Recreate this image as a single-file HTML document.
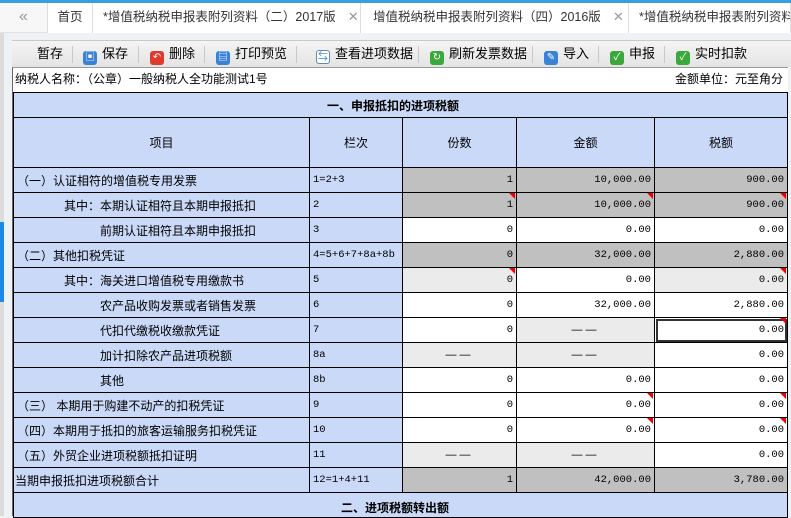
<!DOCTYPE html>
<html><head><meta charset="utf-8"><style>
*{margin:0;padding:0;box-sizing:border-box}
body{width:791px;height:516px;overflow:hidden;background:#eef2f5;font-family:"Liberation Sans","Noto Sans CJK SC",sans-serif;font-size:12px;color:#000;position:relative}
.topline{position:absolute;left:0;top:0;width:791px;height:3px;background:#3a9de0}
.tabs{position:absolute;left:0;top:3px;width:791px;height:30px;background:#f7f7f7;border-bottom:1px solid #e2e2e2}
.tab{position:absolute;top:0;height:30px;line-height:28px;font-size:12.5px;color:#333;border-right:1px solid #ddd;white-space:nowrap;overflow:hidden}
.x{color:#999;font-size:13px;margin-left:12px}
.leftbar{position:absolute;left:0;top:33px;width:4px;height:483px;background:#dcdcdc}
.bluetab{position:absolute;left:0;top:222px;width:4px;height:80px;background:#1e88e5}
.toolbar{position:absolute;left:12px;top:40px;width:779px;height:27px;background:linear-gradient(#f4f4f4,#e4e4e4);border-top:1px solid #c8c8c8}
.tb{position:absolute;top:0;height:26px;line-height:26px;font-size:13px;white-space:nowrap}
.ic{display:inline-block;width:14px;height:14px;border-radius:3px;vertical-align:-2px;margin-right:5px;color:#fff;font-size:10px;line-height:14px;text-align:center}
.sep{position:absolute;top:5px;width:1px;height:17px;background:#c8c8c8}
.panel{position:absolute;left:12px;top:67px;width:776px;height:449px;background:#fff;border-left:1px solid #666;border-top:1px solid #999}
.info{position:absolute;left:15px;top:70px;font-size:12px}
.unit{position:absolute;right:8px;top:70px;font-size:12px}
table{position:absolute;left:13px;top:92px;border-collapse:collapse;table-layout:fixed;width:774px}
td{border:1px solid #000;height:25px;background:#c9d9f7;font-size:12px;white-space:nowrap;overflow:hidden;position:relative;padding:0 3px}
.c{text-align:center}
.n{text-align:right;font-family:"Liberation Mono",monospace;font-size:10.5px}
.g{background:#c0c0c0}.w{background:#fff}.l{background:#ebebeb}
.lc{font-family:"Liberation Mono",monospace;font-size:10.5px}
.d{text-align:center;font-size:11px;letter-spacing:3px}
.r::after{content:"";position:absolute;right:1px;top:0;border-top:6px solid #e00;border-left:6px solid transparent}
.sel{outline:2px solid #333;outline-offset:-3px}
</style></head><body>
<div class="topline"></div>
<div class="tabs">
<div class="tab" style="left:0;width:48px;text-align:center;color:#999;font-size:16px">«</div>
<div class="tab" style="left:48px;width:45px;text-align:center;background:#fff">首页</div>
<div class="tab" style="left:93px;width:268px;padding-left:10px;background:#fff">*增值税纳税申报表附列资料（二）2017版<span class="x">✕</span></div>
<div class="tab" style="left:361px;width:268px;padding-left:12px;background:#fff">增值税纳税申报表附列资料（四）2016版<span class="x">✕</span></div>
<div class="tab" style="left:629px;width:162px;padding-left:10px;background:#fff">*增值税纳税申报表附列资料</div>
</div>
<div class="leftbar"></div><div class="bluetab"></div>
<div class="toolbar">
<div class="tb" style="left:25px">暂存</div><div class="sep" style="left:60px"></div>
<div class="tb" style="left:71px"><span class="ic" style="background:#3b82d6">▣</span>保存</div><div class="sep" style="left:126px"></div>
<div class="tb" style="left:138px"><span class="ic" style="background:#e03a2e">↶</span>删除</div><div class="sep" style="left:192px"></div>
<div class="tb" style="left:204px"><span class="ic" style="background:#3b82d6">▤</span>打印预览</div><div class="sep" style="left:284px"></div>
<div class="tb" style="left:304px"><span class="ic" style="background:#fff;border:1px solid #68a;color:#38c">⇆</span>查看进项数据</div><div class="sep" style="left:406px"></div>
<div class="tb" style="left:418px"><span class="ic" style="background:#3aa83a">↻</span>刷新发票数据</div><div class="sep" style="left:520px"></div>
<div class="tb" style="left:532px"><span class="ic" style="background:#3b82d6">✎</span>导入</div><div class="sep" style="left:586px"></div>
<div class="tb" style="left:598px"><span class="ic" style="background:#3aa83a">✓</span>申报</div><div class="sep" style="left:652px"></div>
<div class="tb" style="left:664px"><span class="ic" style="background:#3aa83a">✓</span>实时扣款</div>
</div>
<div class="panel"></div>
<div class="info">纳税人名称：（公章）一般纳税人全功能测试1号</div>
<div class="unit">金额单位：元至角分</div>
<table>
<colgroup><col style="width:296px"><col style="width:93px"><col style="width:114px"><col style="width:138px"><col style="width:133px"></colgroup>
<tr><td colspan="5" style="padding-left:313px;font-weight:bold">一、申报抵扣的进项税额</td></tr>
<tr><td class="c" style="height:50px">项目</td><td class="c">栏次</td><td class="c">份数</td><td class="c">金额</td><td class="c">税额</td></tr>
<tr><td>（一）认证相符的增值税专用发票</td><td class="lc">1=2+3</td><td class="n g">1</td><td class="n g">10,000.00</td><td class="n g">900.00</td></tr>
<tr><td style="padding-left:50px">其中：本期认证相符且本期申报抵扣</td><td class="lc">2</td><td class="n g r">1</td><td class="n g r">10,000.00</td><td class="n g r">900.00</td></tr>
<tr><td style="padding-left:86px">前期认证相符且本期申报抵扣</td><td class="lc">3</td><td class="n w">0</td><td class="n w">0.00</td><td class="n w">0.00</td></tr>
<tr><td>（二）其他扣税凭证</td><td class="lc">4=5+6+7+8a+8b</td><td class="n g">0</td><td class="n g">32,000.00</td><td class="n g">2,880.00</td></tr>
<tr><td style="padding-left:50px">其中：海关进口增值税专用缴款书</td><td class="lc">5</td><td class="n l r">0</td><td class="n w">0.00</td><td class="n l r">0.00</td></tr>
<tr><td style="padding-left:86px">农产品收购发票或者销售发票</td><td class="lc">6</td><td class="n w">0</td><td class="n w">32,000.00</td><td class="n w">2,880.00</td></tr>
<tr><td style="padding-left:86px">代扣代缴税收缴款凭证</td><td class="lc">7</td><td class="n w">0</td><td class="d l">——</td><td class="n w r sel">0.00</td></tr>
<tr><td style="padding-left:86px">加计扣除农产品进项税额</td><td class="lc">8a</td><td class="d l">——</td><td class="d l">——</td><td class="n w">0.00</td></tr>
<tr><td style="padding-left:86px">其他</td><td class="lc">8b</td><td class="n w">0</td><td class="n w">0.00</td><td class="n w">0.00</td></tr>
<tr><td>（三） 本期用于购建不动产的扣税凭证</td><td class="lc">9</td><td class="n w">0</td><td class="n w r">0.00</td><td class="n w r">0.00</td></tr>
<tr><td>（四）本期用于抵扣的旅客运输服务扣税凭证</td><td class="lc">10</td><td class="n w">0</td><td class="n w r">0.00</td><td class="n w r">0.00</td></tr>
<tr><td>（五）外贸企业进项税额抵扣证明</td><td class="lc">11</td><td class="d l">——</td><td class="d l">——</td><td class="n w">0.00</td></tr>
<tr><td style="padding-left:1px">当期申报抵扣进项税额合计</td><td class="lc">12=1+4+11</td><td class="n g">1</td><td class="n g">42,000.00</td><td class="n g">3,780.00</td></tr>
<tr><td colspan="5" style="padding-left:327px;font-weight:bold;vertical-align:top;padding-top:6px">二、进项税额转出额</td></tr>
</table>
</body></html>
